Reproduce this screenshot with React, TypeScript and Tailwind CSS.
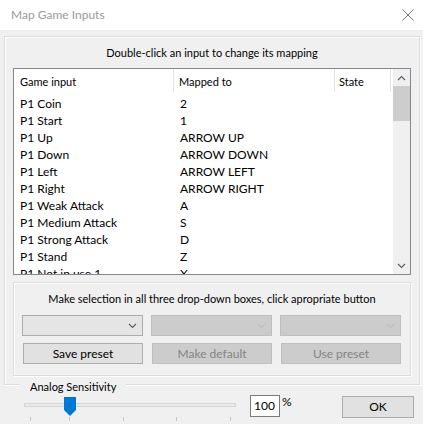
const rows: [string, string][] = [
  ["P1 Coin", "2"],
  ["P1 Start", "1"],
  ["P1 Up", "ARROW UP"],
  ["P1 Down", "ARROW DOWN"],
  ["P1 Left", "ARROW LEFT"],
  ["P1 Right", "ARROW RIGHT"],
  ["P1 Weak Attack", "A"],
  ["P1 Medium Attack", "S"],
  ["P1 Strong Attack", "D"],
  ["P1 Stand", "Z"],
  ["P1 Not in use 1", "X"],
];

function Chevron({ up, color }: { up?: boolean; color: string }) {
  return (
    <svg width="9" height="6" viewBox="0 0 9 6" className={color}>
      <path
        d={up ? "M1 5 L4.5 1.5 L8 5" : "M1 1 L4.5 4.5 L8 1"}
        fill="none"
        stroke="currentColor"
        strokeWidth="1.2"
      />
    </svg>
  );
}

function Combo({ disabled }: { disabled?: boolean }) {
  return (
    <div
      className={`w-[121px] h-[21px] border flex items-center justify-end pr-[5px] ${
        disabled ? "bg-[#cccccc] border-[#bfbfbf]" : "bg-[#e5e5e5] border-[#acacac]"
      }`}
    >
      <Chevron color={disabled ? "text-[#bfbfbf]" : "text-[#606060]"} />
    </div>
  );
}

function Btn({ label, disabled }: { label: string; disabled?: boolean }) {
  return (
    <div
      className={`w-[120px] h-[21px] border flex items-center justify-center ${
        disabled
          ? "bg-[#cccccc] border-[#bfbfbf] text-[#838383]"
          : "bg-[#e1e1e1] border-[#adadad] text-black"
      }`}
    >
      {label}
    </div>
  );
}

export default function App() {
  return (
    <div
      className="w-[423px] h-[424px] bg-[#f0f0f0] flex flex-col overflow-hidden text-[12px] text-black"
      style={{ fontFamily: '"Segoe UI", Lato, sans-serif' }}
    >
      <div className="h-[30px] bg-white flex items-center justify-between pl-[11px] pr-[9px] shrink-0">
        <span className="text-[#9a9a9a] text-[12px]">Map Game Inputs</span>
        <svg width="12" height="12" viewBox="0 0 12 12" className="text-[#777]">
          <path d="M0.5 0.5 L11.5 11.5 M11.5 0.5 L0.5 11.5" stroke="currentColor" strokeWidth="1" />
        </svg>
      </div>

      <div className="ml-[4px] mr-[3px] mt-[6px] h-[349px] border border-[#dcdcdc] shadow-[inset_1px_1px_0_#fff,1px_1px_0_#fff] flex flex-col px-[8px]">
        <div className="h-[31px] flex items-center justify-center pt-[1px] text-[11px]">
          Double-click an input to change its mapping
        </div>

        <div className="h-[207px] border border-[#828790] bg-white flex overflow-hidden">
          <div className="flex-1 flex flex-col">
            <div className="h-[26px] flex shrink-0 text-[11px]">
              <div className="w-[160px] pl-[6px] pt-[5px] border-r border-[#e5e5e5] h-[23px]">Game input</div>
              <div className="w-[161px] pl-[5px] pt-[5px] border-r border-[#e5e5e5] h-[23px]">Mapped to</div>
              <div className="w-[56px] pl-[4px] pt-[5px] border-r border-[#e5e5e5] h-[23px]">State</div>
            </div>
            {rows.map(([a, b]) => (
              <div key={a} className="h-[17px] flex items-center shrink-0">
                <div className="w-[160px] pl-[6px]">{a}</div>
                <div className="pl-[6px]">{b}</div>
              </div>
            ))}
          </div>
          <div className="w-[17px] bg-[#f0f0f0] flex flex-col">
            <div className="h-[17px] flex items-center justify-center">
              <Chevron up color="text-[#606060]" />
            </div>
            <div className="h-[35px] bg-[#cdcdcd]" />
            <div className="flex-1" />
            <div className="h-[17px] flex items-center justify-center">
              <Chevron color="text-[#606060]" />
            </div>
          </div>
        </div>

        <div className="mt-[7px] h-[94px] border border-[#dcdcdc] shadow-[inset_1px_1px_0_#fff,1px_1px_0_#fff] flex flex-col px-[8px]">
          <div className="h-[32px] flex items-center justify-center pt-[1px] whitespace-nowrap text-[11px]">
            Make selection in all three drop-down boxes, click apropriate button
          </div>
          <div className="flex gap-[8px]">
            <Combo />
            <Combo disabled />
            <Combo disabled />
          </div>
          <div className="flex gap-[9px] mt-[7px] pl-[1px]">
            <Btn label="Save preset" />
            <Btn label="Make default" disabled />
            <Btn label="Use preset" disabled />
          </div>
        </div>
      </div>

      <div className="-mt-[6px] ml-[20px] self-start bg-[#f0f0f0] px-[10px] h-[16px] leading-[16px] text-[11px]">
        Analog Sensitivity
      </div>

      <div className="flex items-start mt-[1px] pl-[24px]">
        <div className="relative w-[212px] h-[28px]">
          <div className="absolute left-0 right-0 top-[7px] h-[4px] bg-[#e7eaea] border border-[#d6d6d6]" />
          <svg className="absolute left-[40px] top-[1px]" width="12" height="19" viewBox="0 0 12 19">
            <path d="M0 0 H12 V13 L6 19 L0 13 Z" fill="#0078d7" />
          </svg>
          {[6, 45, 99, 152, 206].map((x) => (
            <div key={x} className="absolute top-[21px] w-px h-[4px] bg-[#c4c4c4]" style={{ left: x }} />
          ))}
        </div>
        <div className="ml-[14px] w-[30px] h-[22px] border border-[#7a7a7a] bg-white flex items-center justify-end pr-[4px] -mt-[1px]">
          100
        </div>
        <div className="ml-[2px] -mt-[1px] leading-[14px]">%</div>
        <div className="ml-auto mr-[9px] w-[72px] h-[22px] bg-[#e1e1e1] border border-[#adadad] flex items-center justify-center">
          OK
        </div>
      </div>
    </div>
  );
}
